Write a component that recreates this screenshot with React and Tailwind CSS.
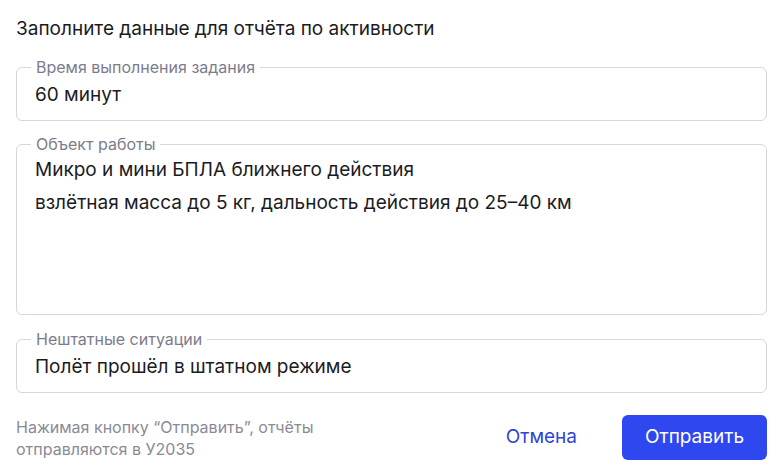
import React from 'react';

const Field = ({ label, className = '', children }) => (
  <fieldset className={`border border-[#d6d6dc] rounded-md pl-[18px] pr-4 ${className}`}>
    <legend className="px-[5px] -ml-[4px] text-[16px] leading-[18px] text-[#7c7c8c]">{label}</legend>
    {children}
  </fieldset>
);

export default function App() {
  return (
    <div className="w-[780px] h-[471px] bg-white pl-4 pr-[13px] pt-[18px] font-['Inter',sans-serif] text-[#1b1b1f]">
      <h1 className="text-[19px] leading-[22px] font-normal">Заполните данные для отчёта по активности</h1>

      <Field label="Время выполнения задания" className="mt-[18px] h-[63px]">
        <div className="text-[19px] leading-[22px] pt-[8px]">60 минут</div>
      </Field>

      <Field label="Объект работы" className="mt-[14px] h-[180px]">
        <div className="text-[19px] leading-[33px]">
          <div>Микро и мини БПЛА ближнего действия</div>
          <div>взлётная масса до 5 кг, дальность действия до 25–40 км</div>
        </div>
      </Field>

      <Field label="Нештатные ситуации" className="mt-[15px] h-[63px]">
        <div className="text-[19px] leading-[22px] pt-[8px]">Полёт прошёл в штатном режиме</div>
      </Field>

      <div className="flex items-center mt-[22px]">
        <p className="text-[16px] leading-[22px] text-[#8a8a96] w-[330px]">
          Нажимая кнопку “Отправить”, отчёты отправляются в У2035
        </p>
        <div className="ml-auto flex items-center">
          <button className="text-[19px] text-[#2f45d6] mr-[45px]">Отмена</button>
          <button className="w-[145px] h-[45px] rounded-md bg-[#2f47ee] text-white text-[19px]">Отправить</button>
        </div>
      </div>
    </div>
  );
}
